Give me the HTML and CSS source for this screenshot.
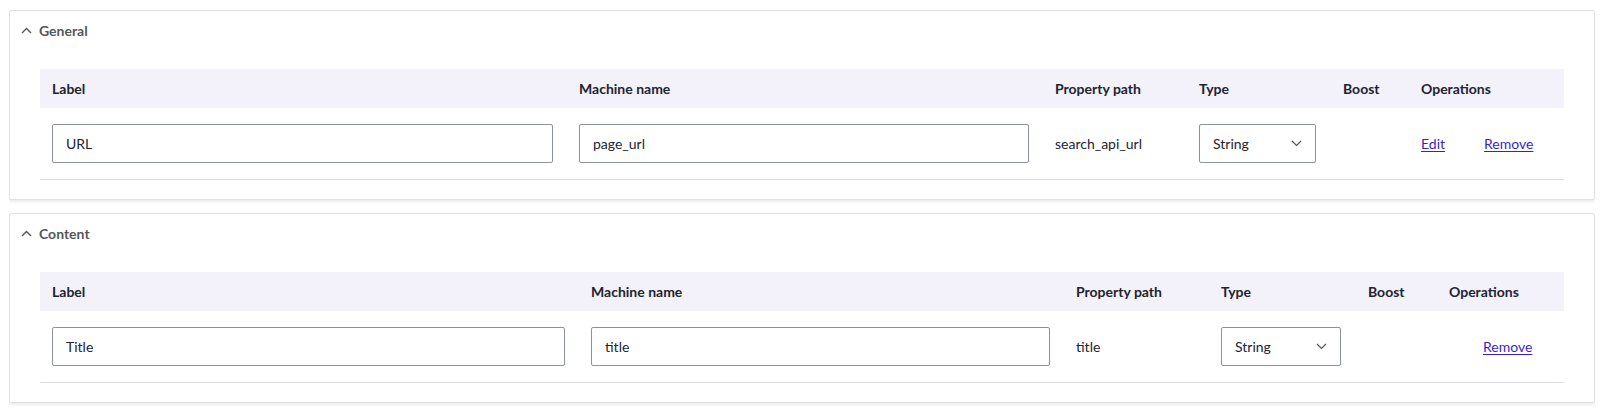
FILE: index.html
```html
<!DOCTYPE html>
<html lang="en">
<head>
<meta charset="utf-8">
<title>Fields</title>
<link rel="stylesheet" href="styles.css">
</head>
<body>
<div class="card">
  <div class="card-summary">
    <svg class="chev" width="11" height="7" viewBox="0 0 11 7"><path d="M1 6 L5.5 1.5 L10 6" fill="none" stroke="#55565c" stroke-width="1.4"/></svg>
    <span>General</span>
  </div>
  <table class="fields fields-general">
    <colgroup>
      <col class="c-label"><col class="c-machine"><col class="c-path"><col class="c-type"><col class="c-boost"><col class="c-edit"><col class="c-remove">
    </colgroup>
    <thead>
      <tr><th>Label</th><th>Machine name</th><th>Property path</th><th>Type</th><th>Boost</th><th colspan="2">Operations</th></tr>
    </thead>
    <tbody>
      <tr>
        <td class="field-cell"><input class="text" type="text" value="URL"></td>
        <td class="field-cell"><input class="text" type="text" value="page_url"></td>
        <td>search_api_url</td>
        <td><div class="select select-a"><span>String</span><svg width="11" height="7" viewBox="0 0 11 7"><path d="M1 1 L5.5 5.5 L10 1" fill="none" stroke="#55565c" stroke-width="1.2"/></svg></div></td>
        <td></td>
        <td><a href="#">Edit</a></td>
        <td><a href="#">Remove</a></td>
      </tr>
    </tbody>
  </table>
</div>
<div class="card">
  <div class="card-summary">
    <svg class="chev" width="11" height="7" viewBox="0 0 11 7"><path d="M1 6 L5.5 1.5 L10 6" fill="none" stroke="#55565c" stroke-width="1.4"/></svg>
    <span>Content</span>
  </div>
  <table class="fields fields-content">
    <colgroup>
      <col class="c-label"><col class="c-machine"><col class="c-path"><col class="c-type"><col class="c-boost"><col class="c-edit"><col class="c-remove">
    </colgroup>
    <thead>
      <tr><th>Label</th><th>Machine name</th><th>Property path</th><th>Type</th><th>Boost</th><th colspan="2">Operations</th></tr>
    </thead>
    <tbody>
      <tr>
        <td class="field-cell"><input class="text" type="text" value="Title"></td>
        <td class="field-cell"><input class="text" type="text" value="title"></td>
        <td>title</td>
        <td><div class="select select-b"><span>String</span><svg width="11" height="7" viewBox="0 0 11 7"><path d="M1 1 L5.5 5.5 L10 1" fill="none" stroke="#55565c" stroke-width="1.2"/></svg></div></td>
        <td></td>
        <td></td>
        <td><a href="#">Remove</a></td>
      </tr>
    </tbody>
  </table>
</div>
</body>
</html>
```

FILE: styles.css
```css
html, body {
  background: #ffffff;
}
body {
  margin: 10px 5px 0 9px;
  font-family: Lato, "Noto Sans", sans-serif;
  font-size: 14px;
  color: #222330;
}
.card {
  background: #ffffff;
  border: 1px solid #dfdfe4;
  border-radius: 2px;
  box-shadow: 0 2px 3px rgba(0, 0, 0, 0.08);
  padding: 0 30px 19px;
  margin-bottom: 13px;
}
.card-summary {
  height: 39px;
  margin-left: -30px;
  padding-left: 11px;
  display: flex;
  align-items: center;
  gap: 7px;
  font-weight: 700;
  font-size: 14px;
  color: #55565c;
}
.chev {
  display: block;
  margin-top: -1px;
}
.fields {
  margin-top: 19px;
  width: 1524px;
  table-layout: fixed;
  border-collapse: collapse;
  border-spacing: 0;
}
.fields th {
  height: 39px;
  padding: 0 12px;
  text-align: left;
  font-weight: 700;
  background: #f3f1f9;
  color: #222330;
}
.fields td {
  padding: 16px 12px;
  border-bottom: 1px solid #dddce3;
  vertical-align: middle;
  white-space: nowrap;
}
.fields td.field-cell {
  padding-right: 14px;
}
.fields-general .c-label { width: 527px; }
.fields-general .c-machine { width: 476px; }
.fields-general .c-path { width: 144px; }
.fields-general .c-type { width: 144px; }
.fields-general .c-boost { width: 78px; }
.fields-general .c-edit { width: 63px; }
.fields-general .c-remove { width: 92px; }
.fields-content .c-label { width: 539px; }
.fields-content .c-machine { width: 485px; }
.fields-content .c-path { width: 145px; }
.fields-content .c-type { width: 147px; }
.fields-content .c-boost { width: 81px; }
.fields-content .c-edit { width: 34px; }
.fields-content .c-remove { width: 93px; }
.text {
  display: block;
  box-sizing: border-box;
  width: 100%;
  height: 39px;
  margin: 0;
  padding: 0 13px;
  border: 1px solid #8e929c;
  border-radius: 2px;
  font-family: inherit;
  font-size: 14px;
  color: #222330;
  background: #ffffff;
  outline: none;
}
.select {
  box-sizing: border-box;
  height: 39px;
  padding: 0 13px 0 13px;
  border: 1px solid #8e929c;
  border-radius: 2px;
  display: flex;
  align-items: center;
  justify-content: space-between;
  background: #ffffff;
}
.select svg {
  display: block;
}
.select-a { width: 117px; }
.select-b { width: 120px; }
.fields a {
  color: #3b1fc9;
  text-decoration: underline;
  text-underline-offset: 2px;
}
```
